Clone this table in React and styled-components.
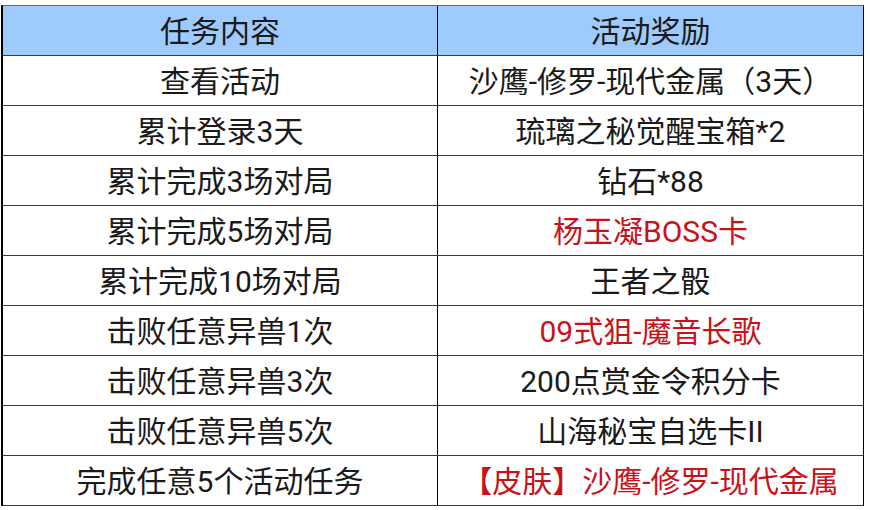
import React from 'react';
import styled, {createGlobalStyle} from 'styled-components';

const GlobalStyle = createGlobalStyle`
    html, body {
        margin: 0;
        padding: 0;
        background: #ffffff;
    }
    body {
        font-family: Roboto, "Noto Sans CJK SC", sans-serif;
    }
`;

const rows = [
    {task: '查看活动', reward: '沙鹰-修罗-现代金属（3天）'},
    {task: '累计登录3天', reward: '琉璃之秘觉醒宝箱*2'},
    {task: '累计完成3场对局', reward: '钻石*88'},
    {task: '累计完成5场对局', reward: '杨玉凝BOSS卡', red: true},
    {task: '累计完成10场对局', reward: '王者之骰'},
    {task: '击败任意异兽1次', reward: '09式狙-魔音长歌', red: true},
    {task: '击败任意异兽3次', reward: '200点赏金令积分卡'},
    {task: '击败任意异兽5次', reward: '山海秘宝自选卡II'},
    {task: '完成任意5个活动任务', reward: '【皮肤】沙鹰-修罗-现代金属', red: true},
];

const Table = styled.div`
    width: 863px;
    margin: 5px 0 0 1px;
    border-top: 1px solid #6b6b6b;
    border-left: 2px solid #000;
    border-right: 1px solid #000;
    box-sizing: border-box;
`;

const Row = styled.div`
    display: grid;
    grid-template-columns: 434px 1fr;
    height: 50px;
    box-sizing: border-box;
    border-bottom: 1px solid #3c3c3c;
    box-shadow: 0 1px 0 #b8b8b8;
    background: ${p => (p.head ? '#9fcbfc' : '#ffffff')};
    position: relative;
`;

const Cell = styled.div`
    display: flex;
    align-items: center;
    justify-content: center;
    font-size: 30px;
    color: ${p => (p.red ? '#c8121a' : '#1a1a1a')};
    white-space: nowrap;
    padding-bottom: 3px;
    & + & {
        border-left: 1px solid #000;
    }
`;

export default function App() {
    return (
        <>
            <GlobalStyle/>
            <Table>
                <Row head>
                    <Cell>任务内容</Cell>
                    <Cell>活动奖励</Cell>
                </Row>
                {rows.map((r, i) => (
                    <Row key={i}>
                        <Cell>{r.task}</Cell>
                        <Cell red={r.red}>{r.reward}</Cell>
                    </Row>
                ))}
            </Table>
        </>
    );
}
